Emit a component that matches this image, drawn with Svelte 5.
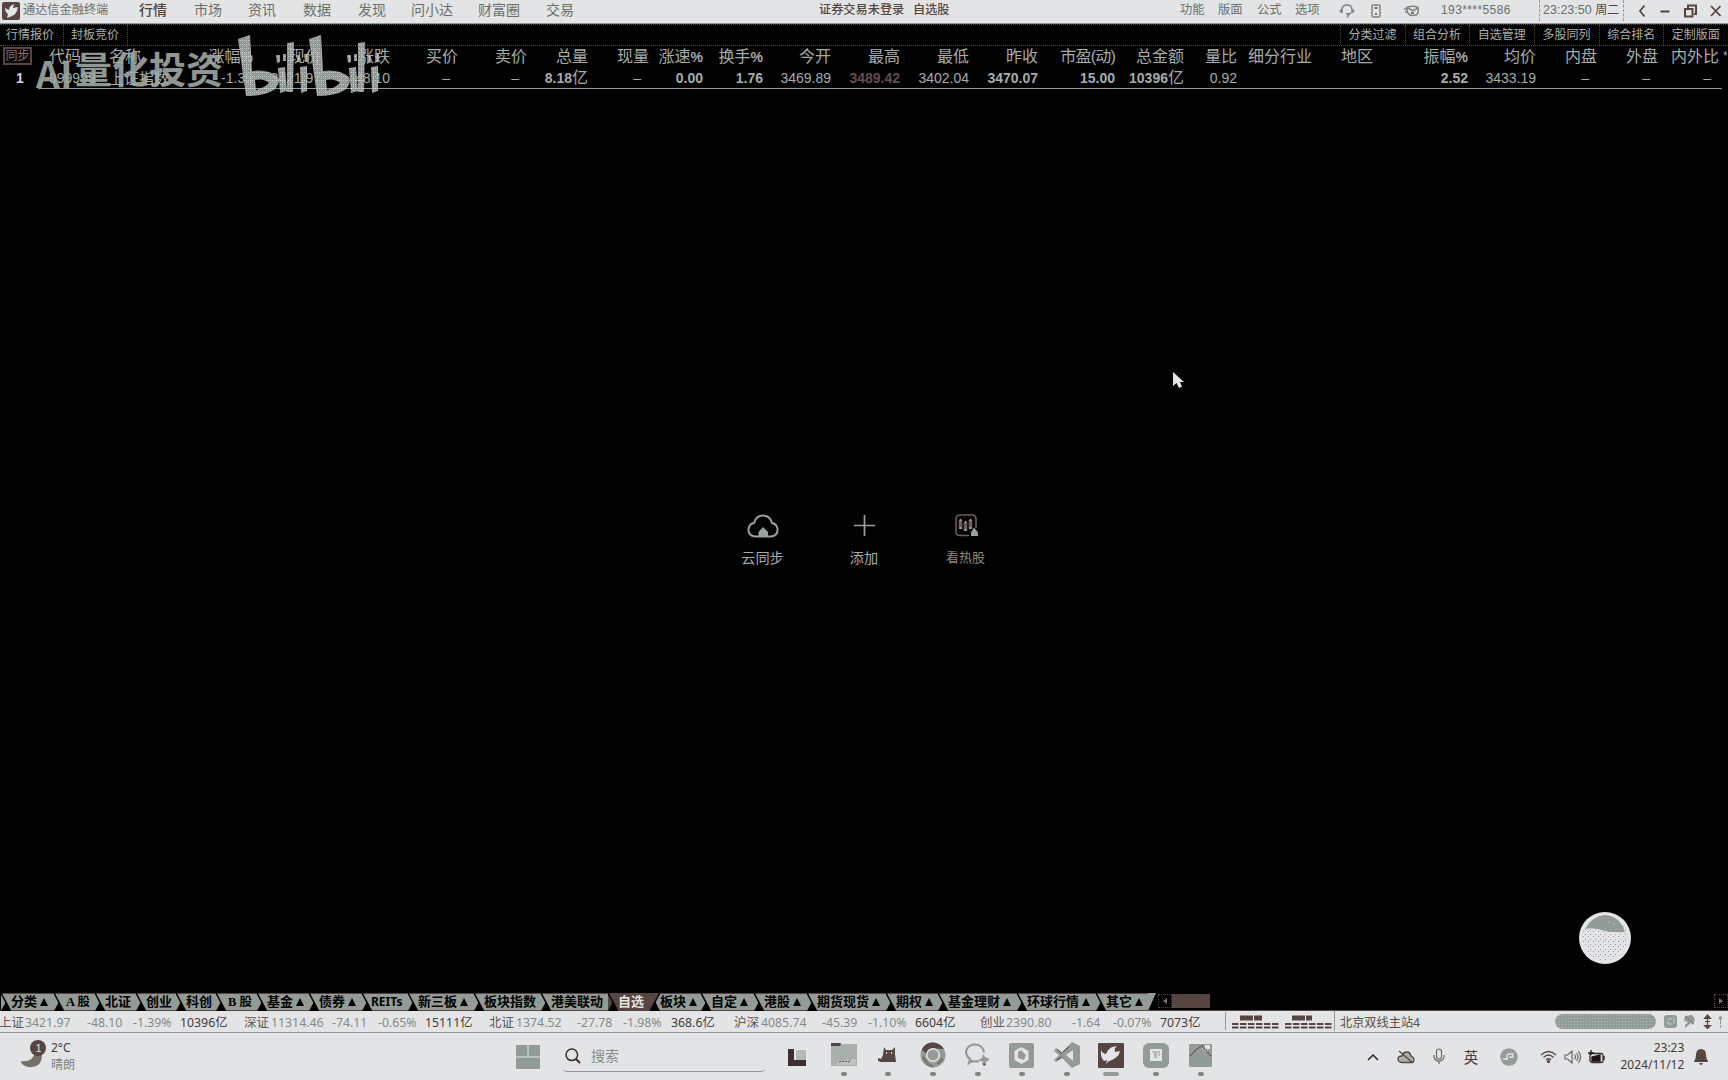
<script>
  // Each strip is a list of [text, start x, tone]; a cell runs up to the next start.
  const toCells = (list, end) =>
    list.map((it, i) => ({
      text: it[0],
      tone: it[2] ?? '',
      width: (i + 1 < list.length ? list[i + 1][1] : end) - it[1]
    }));

  const menu = toCells(
    [['行情', 139, 'on'], ['市场', 194], ['资讯', 248], ['数据', 303], ['发现', 358], ['问小达', 411], ['财富圈', 478], ['交易', 546]],
    819
  );
  const tools = toCells([['功能', 1180], ['版面', 1218], ['公式', 1257], ['选项', 1295]], 1339);
  const subRight = ['分类过滤', '组合分析', '自选管理', '多股同列', '综合排名', '定制版面'];

  // Right edge of every column, header label, value, tone and unit.
  const columns = [
    [253, '涨幅%', '-1.39'], [321, '现价', '3421.97'], [390, '涨跌', '-48.10'],
    [458, '买价', '–'], [527, '卖价', '–'], [588, '总量', '8.18', 'b', '亿'], [649, '现量', '–'],
    [703, '涨速%', '0.00', 'b'], [763, '换手%', '1.76', 'b'], [831, '今开', '3469.89'],
    [900, '最高', '3489.42', 'up'], [969, '最低', '3402.04'], [1038, '昨收', '3470.07', 'b'],
    [1115, '市盈(动)', '15.00', 'b'], [1184, '总金额', '10396', 'b', '亿'], [1237, '量比', '0.92'],
    [1312, '细分行业', ''], [1373, '地区', ''], [1468, '振幅%', '2.52', 'b'],
    [1536, '均价', '3433.19'], [1597, '内盘', '–'], [1658, '外盘', '–'], [1719, '内外比', '–']
  ].map((c, i, all) => ({
    w: c[0] - (i ? all[i - 1][0] : 180), head: c[1], value: c[2], tone: c[3] ?? '', unit: c[4] ?? ''
  }));

  const sheets = [
    ['分类▲', 53], ['A 股', 41], ['北证', 41], ['创业', 40], ['科创', 40], ['B 股', 41], ['基金▲', 52],
    ['债券▲', 53], ['REITs', 46], ['新三板▲', 66], ['板块指数', 67], ['港美联动', 67], ['自选', 42],
    ['板块▲', 51], ['自定▲', 53], ['港股▲', 53], ['期货现货▲', 79], ['期权▲', 52], ['基金理财▲', 79],
    ['环球行情▲', 79], ['其它▲', 52]
  ];

  const ticker = toCells(
    [
      ['上证', -1, 'n'], ['3421.97', 25], ['-48.10', 87], ['-1.39%', 133], ['10396亿', 180, 'd'],
      ['深证', 244, 'n'], ['11314.46', 271], ['-74.11', 332], ['-0.65%', 378], ['15111亿', 425, 'd'],
      ['北证', 489, 'n'], ['1374.52', 516], ['-27.78', 577], ['-1.98%', 623], ['368.6亿', 671, 'd'],
      ['沪深', 734, 'n'], ['4085.74', 761], ['-45.39', 822], ['-1.10%', 868], ['6604亿', 915, 'd'],
      ['创业', 980, 'n'], ['2390.80', 1006], ['-1.64', 1072], ['-0.07%', 1113], ['7073亿', 1160, 'd']
    ],
    1225
  );
</script>

<div class="screen">
  <header class="title">
    <svg class="logo" width="18" height="18" viewBox="0 0 18 18"><rect width="18" height="18" rx="2" fill="#574541" /><path d="M3 6l4 2q0-4 5-6l-1 4 5-1q-1 7-6 9l-5 2 1-4q-3-2-3-6Z" fill="#e2e4e5" /></svg>
    <span class="brand">通达信金融终端</span>
    <nav>
      {#each menu as m}<span class={m.tone} style="width:{m.width}px">{m.text}</span>{/each}
    </nav>
    <span class="state">证券交易未登录</span><span class="state own">自选股</span>
    <div class="tools">
      {#each tools as t}<span style="width:{t.width}px">{t.text}</span>{/each}
      <svg width="16" height="14" viewBox="0 0 16 14" fill="none" stroke="#7d8580" stroke-width="1.500"><path d="M3 9V6q0-5 5-5t5 5v3M1.500 5.500v3M14.500 5.500v3M12 9l-4 1.500M7 9.500l3 1-2 3" /></svg>
      <svg class="phone" width="10" height="14" viewBox="0 0 10 14" fill="none" stroke="#7d8580" stroke-width="1.500"><rect x="1" y="1" width="8" height="12" rx="1" /><path d="M3.500 4h3M4 10h2" stroke="#574541" /></svg>
      <svg class="mail" width="17" height="12" viewBox="0 0 17 12" fill="none" stroke="#7d8580" stroke-width="1.500"><path d="M4 2.500q5-2.500 11 0 1 4-1 7-4 2-8 0-2-2-2-7ZM5 3l5 3 5-3M1 4h3M2 7h3" /><path d="M8 8h3" stroke="#574541" /></svg>
      <span class="account">193****5586</span>
      <span class="clock">23:23:50 <i>周二</i></span>
      <svg class="win" width="86" height="14" viewBox="0 0 86 14" fill="none" stroke="#574541" stroke-width="1.800"><path d="M6.500 1.500 2 7l4.500 5.500M22.500 7.500h9M73 2l9.500 10M82.500 2 73 12" /><path d="M47 5h7.500v7.500H47zM50 4.500V1.500h8V10H56" stroke-width="2" /></svg>
    </div>
  </header>

  <div class="sub">
    <span>行情报价</span><span>封板竞价</span>
    <div class="right">{#each subRight as s}<span>{s}</span>{/each}</div>
  </div>

  <section class="table">
    <div class="tr head">
      <b class="sync">同步</b><span class="code">代码</span><span class="name">名称</span>
      {#each columns as c}<span class="num" class:paren={c.head.includes('(')} style="width:{c.w}px">{c.head.replace('%', '')}{#if c.head.endsWith('%')}<em>%</em>{/if}</span>{/each}
      <span class="more">*</span>
    </div>
    <div class="tr data">
      <span class="idx">1</span><span class="code">999999</span><span class="name">上证指数</span>
      {#each columns as c}<span class="num {c.tone}" class:dash={c.value === '–'} style="width:{c.w}px">{c.value}{#if c.unit}<i>{c.unit}</i>{/if}</span>{/each}
    </div>
    <div class="rule"></div>
    <div class="watermark">
      <span class="latin">AI</span><span>量化投资</span>
      <svg width="144" height="64" viewBox="0 0 144 64">
        <defs>
          <pattern id="grain" width="4" height="4" patternUnits="userSpaceOnUse"><rect width="4" height="4" fill="#a3aca7" /><path d="M0 0h1v1H0zM2 2h1v1H2zM0 2h1v1H0z" fill="#e2e4e5" /></pattern>
          <g id="half">
            <path fill-rule="evenodd" d="M0 5 12 1 14 37Q30 35 40 43 43 49 36 56 26 62 8 62ZM17 46 18 56Q26 54 31 49 26 44 17 46Z" />
            <path d="M38 21h4v7l-3 1zM45 20h3v7h-3zM40 34l7-1 2 24-7 2zM49 9l7-1-1 50h-6zM59 21h3v7h-3zM66 20h4v8h-3zM62 33l7-1v25l-6 2z" />
          </g>
        </defs>
        <g fill="url(#grain)"><use href="#half" /><use href="#half" x="71" /></g>
      </svg>
    </div>
  </section>

  <main>
    <div class="action">
      <svg width="32" height="24" viewBox="0 0 32 24"><path d="M8 22.500q-7-1-6.500-7.500Q2 10 7 9 9 1.500 16 1.500T25 9q5 1 5.500 6 .5 6.500-6.500 7.500Z" fill="none" stroke="#98a19b" stroke-width="2" /><path d="m16 13 5 5v4.500H11.500V18Z" fill="#98a19b" /></svg>
      <span>云同步</span>
    </div>
    <div class="action">
      <svg width="32" height="24" viewBox="0 0 32 24"><path d="M6 11.500h21M16.500 1v21" stroke="#98a19b" stroke-width="1.700" /></svg>
      <span>添加</span>
    </div>
    <div class="action hot">
      <svg width="32" height="24" viewBox="0 0 32 24" fill="none" stroke="#6d5f5b" stroke-width="1.600"><path d="M19 21.500h-9q-4 0-4-4V5q0-4 4-4h12q4 0 4 4v9" /><path d="M10.500 6v9M15.500 8v9M20.500 6v9" stroke="#6d5f5b" stroke-width="3.600" /><path d="M10.500 5v2M15.500 7v2M20.500 5v2M10.500 13v2M15.500 15v2M20.500 13v2" stroke="#a0a8a3" stroke-width="1.600" /><path d="m24 13.500 4 5v3.500h-7v-3.500Z" fill="#98a19b" stroke="none" /></svg>
      <span>看热股</span>
    </div>
    <svg class="cursor" width="14" height="20" viewBox="0 0 14 20"><path d="M1 1v14l3.500-3 2.500 5 3-1.500L8 11h4Z" fill="#e2e4e5" /></svg>
    <svg class="orb" width="54" height="54" viewBox="0 0 54 54">
      <defs><pattern id="dots" width="5" height="5" patternUnits="userSpaceOnUse"><path d="M0 0h1v1H0zM2 3h1v1H2z" fill="#929b95" /></pattern></defs>
      <circle cx="27" cy="27" r="26" fill="#e2e4e5" /><circle cx="27" cy="27" r="22.500" fill="url(#dots)" />
      <path d="M7 18Q14 5 27 4q15 1 20 17-14 1-23-2-9-3-17-1Z" fill="#929b95" />
      <circle cx="31" cy="11" r=".7" fill="#e2e4e5" /><circle cx="36" cy="13" r=".7" fill="#e2e4e5" />
    </svg>
  </main>

  <div class="sheets">
    {#each sheets as s, i}
      <div class="sheet" class:sel={s[0] === '自选'} class:serif={/^[AB]/.test(s[0])} class:latin={s[0] === 'REITs'} style="width:{s[1]}px">
        {#if i && sheets[i - 1][0] === '自选'}
          <svg width="10" height="18" viewBox="0 0 10 18"><path d="M0 0h10L0 18Z" fill="#574541" /><path d="M0 18 5 8l5 10Z" /><path d="M10 0 0 18" stroke="#000" stroke-width="1.500" /></svg>
        {:else}
          <svg width="10" height="18" viewBox="0 0 10 18"><path d="M0 18 5 8.500 10 18Z" /><path d="M0 0 9.500 18" stroke="#000" stroke-width="1.500" /></svg>
        {/if}
        <span>{s[0].replace('▲', '')}</span>{#if s[0].endsWith('▲')}<i></i>{/if}
      </div>
    {/each}
    <svg class="tail" width="8" height="18" viewBox="0 0 8 18"><path d="M0 0h8L0 18Z" fill="#929b95" /></svg>
    <div class="arrow"></div><div class="thumb"></div>
    <div class="arrow end"></div>
  </div>

  <div class="ticker">
    {#each ticker as t}<span class={t.tone} style="width:{t.width}px">{t.text}</span>{/each}
    <svg class="bars" width="110" height="21" viewBox="0 0 110 21">
      <path d="M.5 1v18M109.500 0v20" stroke="#929b95" />
      <path d="M15 7h22M67 7h20" stroke="#574541" stroke-width="5" stroke-dasharray="13 1" />
      <path d="M7 13h47M60 13h47M7 16.500h47M60 16.500h47" stroke="#574541" stroke-width="1.800" stroke-dasharray="6.500 1.500" />
    </svg>
    <span class="host">北京双线主站4</span>
    <div class="pill"></div>
    <svg width="62" height="16" viewBox="0 0 62 16">
      <rect width="13" height="13" x="0" y="1" rx="3" fill="#929b95" /><path d="M4 5h4M4 7v3h4M10 4v6" stroke="#c9cecb" fill="none" />
      <path d="M21 2l7-1 3 4-2 6-2-2-6 5v-3l3-3-4-1Z" fill="#929b95" /><path d="m22 3 8 7" stroke="#574541" stroke-dasharray="1 1.500" />
      <path d="m43.500 1 3 3.500h-6ZM43.500 14.500l3-3h-6ZM43.500 4v9M41 7.500h5" fill="#574541" stroke="#574541" stroke-width="1.200" />
      <path d="M56.500 5v9" stroke="#929b95" stroke-dasharray="5 1" /><circle cx="56.500" cy="4" r="1.800" fill="#929b95" />
    </svg>
  </div>

  <footer>
    <div class="weather">
      <svg width="30" height="32" viewBox="0 0 30 32"><path d="M20 9q4 18-9 19-8 1-12-6 13 2 15-9Z" fill="#76706b" /><circle cx="17" cy="9" r="8" fill="#574541" /><text x="14.500" y="13" fill="#e2e4e5" font-size="11" font-family="Liberation Sans, sans-serif">1</text></svg>
      <div><span>2°C</span><span class="sky">晴朗</span></div>
    </div>
    <svg class="start" width="24" height="24" viewBox="0 0 24 24" fill="#929b95"><path d="M0 0h11.500v11.500H0zM12.500 0H24v11.500H12.500zM0 12.500h24V24H0z" /></svg>
    <div class="search"><svg width="16" height="16" viewBox="0 0 16 16" fill="none" stroke="#3a2f2d" stroke-width="1.500"><circle cx="6.800" cy="6.800" r="5.800" /><path d="m11 11 4 4" stroke-width="2" /></svg><span>搜索</span></div>
    <div class="apps">
      <div class="views"><svg viewBox="0 0 26 26"><path d="M12 8h10v10H12z" fill="#b3bab6" /><path d="M4 7h6v11h12v6H4z" fill="#3c2f2d" /></svg></div>
      <div class="run"><svg viewBox="0 0 26 26"><path d="M0 2h26v21q0 1-1 1H1q-1 0-1-1Z" fill="#a9b0ac" /><path d="M0 1h10l-1 3H0z" fill="#574541" /><path d="M5 22q2-4 6-3l4-1 2-1h8v6H5Z" fill="#c0c5c2" /><path d="M8 20l5-1 5 1 1-3" fill="none" stroke="#574541" stroke-dasharray="2 1" /></svg></div>
      <div class="run"><svg viewBox="0 0 26 26"><path d="m9 5 2 3h6l3-3v7l1 8H6l-3-1v-3l3 1 2-4Z" fill="#574541" /><path d="M11 10h1v2h-1zM16 10h1v2h-1z" fill="#e2e4e5" /></svg></div>
      <div class="run"><svg viewBox="0 0 26 26"><circle cx="13" cy="13" r="9.500" fill="none" stroke="#929b95" stroke-width="6" /><path d="M2 7q4-7 11-6.500T24 7L13 6.500Q8 8 7 12L2 8Z" fill="#574541" /><path d="m3 15 5 7 5 3M18 22l5-6" fill="none" stroke="#574541" stroke-width="2" stroke-dasharray="1 1" /><circle cx="13" cy="13" r="7" fill="#e2e4e5" /><circle cx="13" cy="13" r="5.500" fill="#929b95" /></svg></div>
      <div class="run"><svg viewBox="0 0 26 26"><path d="M14 19q-4 1-7 0l-3 2 1-4Q1 14 1 10q1-7 9-7.500 8 .5 9 8" fill="none" stroke="#929b95" stroke-width="2.200" /><path d="m18 12 2 3 5 2-4 3-1 4-2-4-5-2 4-2Z" fill="#929b95" /><path d="m17 21 4 1-2 2Z" fill="#574541" /></svg></div>
      <div class="run"><svg viewBox="0 0 26 26"><rect y="1" width="25" height="25" rx="2" fill="#929b95" /><path d="m12.500 5 7 4v9l-7 4-7-4V9Z" fill="#e2e4e5" /><path d="m9 10 3-2 5 5-2 5-6-2Z" fill="#929b95" /></svg></div>
      <div class="run"><svg viewBox="0 0 26 26"><path d="M18 0l8 4v18l-8 4L8 16l-6 4-2-2 5-5-5-4 2-3 6 4Z" fill="#929b95" /><path d="M19 8v11l-7-6Z" fill="#e2e4e5" /><path d="m3 7 5 5M3 18l5-3M9 10l6-5" stroke="#574541" /></svg></div>
      <div class="run active"><svg viewBox="0 0 26 26"><rect y="1" width="26" height="25" rx="1" fill="#574541" /><path d="M3 8q1 3 5 4 2-5 6-7l5-1q-3 2-2 6l5-1q-1 6-8 9-5 1-6 5l1-5-3 1q-4-4-3-11Z" fill="#e2e4e5" /></svg></div>
      <div class="run"><svg viewBox="0 0 26 26"><rect y="1" width="26" height="25" rx="6" fill="#929b95" /><path d="M8 7h11v12H7V7Z" fill="#e2e4e5" /><path d="M9 10h3v6M15 10h-2v6M16 9v5" fill="none" stroke="#929b95" /></svg></div>
      <div class="run"><svg viewBox="0 0 26 26"><rect x="1" y="2" width="23" height="23" rx="1" fill="#929b95" /><path d="m2 14 7-7 5-3 9 10" fill="none" stroke="#574541" stroke-width="1.200" stroke-dasharray="2 1" /><path d="M17 3h5v4h-5z" fill="#e2e4e5" /><path d="M14 6l3 3 3-1" fill="none" stroke="#e2e4e5" stroke-dasharray="1 1" /></svg></div>
    </div>
    <div class="tray">
      <svg width="12" height="8" viewBox="0 0 12 8" fill="none" stroke="#2c2422" stroke-width="1.500"><path d="m1 7 5-5 5 5" /></svg>
      <svg class="t2" width="18" height="14" viewBox="0 0 18 14" fill="none" stroke="#574541" stroke-width="1.300"><path d="M5 12.500Q1 12 1 9t4-3q1-4 5-4 3 0 4 4 3 1 3 4t-3 2.500Z" fill="#a8b0ac" /><path d="m2 1 14 12" /></svg>
      <svg class="t3" width="12" height="17" viewBox="0 0 12 17" fill="none" stroke="#6d6a66" stroke-width="1.200"><rect x="3.500" y="1" width="5" height="10" rx="2.500" /><path d="M1 7v2q1 4 5 4t5-4V7M6 13v3" /></svg>
      <span class="ime">英</span>
      <svg class="t4" width="18" height="18" viewBox="0 0 18 18"><circle cx="9" cy="9" r="8.700" fill="#929b95" /><path d="M3 11h5M7 12V8q0-2 2-2h4v3H9" stroke="#e2e4e5" stroke-width="1.400" fill="none" /></svg>
      <svg class="t5" width="17" height="13" viewBox="0 0 17 13" fill="none" stroke="#574541" stroke-width="1.200"><path d="M1 5q7.500-7 15 0M3.500 7.500q5-5 10 0M6 10q2.500-2.500 5 0" /><circle cx="8.500" cy="11.500" r="1" fill="#574541" /></svg>
      <svg class="t6" width="18" height="14" viewBox="0 0 18 14" fill="none" stroke="#6d6a66" stroke-width="1.200"><path d="M1 5h2.500L8 1v12L3.500 9H1ZM10.500 4.500q2 2.500 0 5M12.500 3q3 4 0 8M14.500 1q4 6 0 12" /></svg>
      <svg class="t7" width="18" height="14" viewBox="0 0 18 14"><rect x="2" y="3.500" width="13" height="9" rx="2" fill="#fff0" stroke="#3a2f2d" stroke-width="1.300" /><path d="M4 11V7l8-2v6ZM16 6v4M3 0v5M0 3h6" fill="#1c1615" stroke="#1c1615" stroke-width="1.300" /></svg>
      <div class="when"><span>23:23</span><span>2024/11/12</span></div>
      <svg class="bell" width="14" height="16" viewBox="0 0 14 16"><path d="M7 0q5 0 5 6 0 4 2 6v1H0v-1q2-2 2-6 0-6 5-6ZM5 14h4q-1 2-2 2t-2-2Z" fill="#574541" /></svg>
    </div>
  </footer>
</div>

<style>
  :global(body) { margin: 0; background: #000; }
  .screen {
    width: 1728px; height: 1080px; overflow: hidden; display: flex; flex-direction: column;
    background: #000; color: #a6ada9; white-space: nowrap;
    font-family: "Liberation Sans", "Noto Sans CJK SC", sans-serif;
  }
  .screen * { box-sizing: border-box; }
  span, svg { flex: none; }
  i, em { font-style: normal; }

  .title { height: 24px; display: flex; align-items: center; background: #e2e4e5; border-bottom: 1px solid #929b95; color: #69706c; padding: 0 0 2px 2px; line-height: 21px; }
  .brand { width: 116px; padding-left: 3px; font-size: 12.2px; }
  nav { display: flex; margin-left: 3px; font-size: 14px; }
  nav .on { color: #574541; font-weight: 500; }
  .state { font-size: 12.2px; width: 94px; color: #574541; font-weight: 500; }
  .own { width: 267px; }
  .tools { display: flex; align-items: center; font-size: 12.3px; }
  .phone { margin-left: 16px; }
  .mail { margin-left: 22px; }
  .account { margin-left: 21px; width: 98px; font-size: 12px; letter-spacing: .4px; }
  .clock { width: 85px; height: 21px; border-left: 1px dashed #929b95; border-right: 1px dashed #929b95; padding-left: 3px; font-size: 12.5px; }
  .clock i { font-size: 12px; color: #574541; }
  .win { margin-left: 14px; }

  .sub { height: 22px; display: flex; border: dotted #574541; border-width: 1px 0; font-size: 12px; line-height: 21px; color: #a9afab; }
  .sub > span { width: 64px; padding-left: 7px; border-right: 1px dotted #574541; }
  .sub > span:first-child { padding-left: 6px; }
  .right { margin-left: auto; display: flex; }
  .right span { width: 64.700px; border-left: 1px dotted #574541; padding-left: 7.500px; }

  .table { height: 43px; position: relative; }
  .tr { display: flex; height: 21px; line-height: 21px; }
  .head { font-size: 16px; padding-left: 1px; }
  .head em { font-size: 14px; font-weight: bold; }
  .head .paren { letter-spacing: -.8px; }
  .sync { width: 29px; height: 18px; margin: 1px 17px 0 2px; border: 2px solid #574541; background: #0b0808; font-size: 12px; font-weight: 400; line-height: 14px; text-align: center; color: #84736d; }
  .code { width: 60px; }
  .name { width: 71px; }
  .num { text-align: right; }
  .more { padding-left: 4px; width: 8px; overflow: hidden; font-size: 12px; }
  .data { font-size: 14px; line-height: 23px; }
  .data .b { font-weight: bold; }
  .data .b i { font-size: 16px; font-weight: 400; line-height: 1; }
  .data .up { color: #624e4a; font-weight: bold; }
  .data .dash { padding-right: 8px; }
  .data .name { font-size: 15px; }
  .idx { width: 49px; padding-left: 16px; font-weight: bold; color: #d5d8d8; }
  .rule { height: 1px; margin-left: 38px; width: 1684px; background: #929b95; }
  .watermark { position: absolute; left: 36px; top: -12px; height: 64px; display: flex; font-size: 37px; font-weight: bold; line-height: 76px; opacity: .88; color: #a3aca7; }
  .watermark .latin { width: 39px; font-family: "Noto Sans CJK SC", sans-serif; letter-spacing: .5px; }
  .watermark svg { margin-left: 15px; }

  main { flex: 1; position: relative; display: flex; justify-content: center; padding: 425px 0 0 0; }
  .action { width: 101.500px; display: flex; flex-direction: column; align-items: center; gap: 10px; font-size: 14.200px; line-height: 20px; }
  .hot { font-size: 13px; color: #8d8782; line-height: 19px; }
  .cursor { position: absolute; left: 1172px; top: 282px; }
  .orb { position: absolute; left: 1578px; top: 822px; }

  .sheets { height: 18px; display: flex; padding-left: 1px; align-items: stretch; border-bottom: 1px solid #574541; }
  .sheet { flex: none; display: flex; align-items: center; background: #929b95; border-top: 1px solid #574541; color: #000; font-size: 13px; font-weight: bold; line-height: 16px; }
  .sheet svg { margin-top: -1px; height: 18px; }
  .sheet.sel { background: #574541; color: #e2e4e5; }
  .sheet.serif { font-family: "Liberation Serif", "Noto Sans CJK SC", serif; }
  .sheet.serif span { padding-left: 2px; font-size: 12.500px; }
  .sheet.latin { font-size: 12px; font-family: "Noto Sans", sans-serif; }
  .sheet.latin span { margin-left: -1px; }
  .sheet i { border: 4px solid transparent; border-top: 0; border-bottom: 8px solid #000; margin-left: 3px; }
  .arrow { width: 14px; height: 14px; margin-top: 1px; border: 1px dotted #574541; display: grid; place-items: center; }
  .arrow::before { content: ""; border: 3px solid transparent; border-left: 0; border-right: 4px solid #806f69; }
  .tail + .arrow { margin-left: 2px; }
  .thumb { width: 38px; height: 14px; margin-top: 1px; background: #574541; }
  .arrow.end { margin-left: auto; }
  .arrow.end::before { border: 3px solid transparent; border-right: 0; border-left: 4px solid #806f69; }

  .ticker { height: 22px; display: flex; align-items: center; background: #e2e4e5; border-bottom: 1px solid #929b95; color: #848c87; font-family: "Noto Sans", "Noto Sans CJK SC", sans-serif; font-size: 12.300px; line-height: 19px; }
  .ticker span { padding-top: 2px; }
  .ticker span:first-child { margin-left: -1px; }
  .ticker .n { color: #5f5a56; font-size: 12.500px; }
  .ticker .d { color: #463b38; }
  .ticker .host { width: 220px; padding-left: 5px; color: #574f4b; font-size: 12.200px; }
  .pill { width: 101px; height: 15px; margin-right: 8px; border-radius: 8px; background: radial-gradient(#b8bebb 30%, transparent 32%) 0 0 / 3px 3px, #929b95; }

  footer { height: 47px; display: flex; align-items: center; background: #e2e4e5; color: #463b38; font-family: "Noto Sans", "Noto Sans CJK SC", sans-serif; }
  .weather { width: 497px; padding-left: 21px; margin-bottom: 2px; display: flex; gap: 0; font-size: 12px; line-height: 17px; }
  .weather div { display: flex; flex-direction: column; }
  .weather .sky { color: #7d8580; }
  .start { margin-left: 19px; }
  .search { width: 202px; height: 32px; margin: 0 0 1px 23px; display: flex; align-items: center; gap: 10px; padding-left: 2px; border-bottom: 1px solid #929b95; border-radius: 4px; font-size: 14px; color: #868e89; }
  .search span { margin-top: -2px; }
  .apps { margin-left: 10px; display: flex; }
  .apps div { width: 44.600px; height: 47px; display: flex; flex-direction: column; align-items: center; padding-top: 9px; }
  .apps .views { width: 46.500px; padding-right: 2px; }
  .apps svg { width: 26px; height: 26px; }
  .run::after { content: ""; width: 6px; height: 4px; margin-top: 4px; border-radius: 2px; background: #7d8580; }
  .active::after { width: 16px; background: #929b95; }
  .tray { margin-left: 144px; display: flex; align-items: center; }
  .t2 { margin-left: 18px; }
  .t3 { margin-left: 18px; }
  .ime { margin-left: 19px; font-size: 14.500px; }
  .t4 { margin-left: 22px; }
  .t5 { margin-left: 22px; }
  .t6 { margin-left: 7px; }
  .t7 { margin-left: 6px; }
  .when { width: 78px; margin-bottom: 2px; display: flex; flex-direction: column; text-align: right; font-size: 12px; line-height: 17px; }
  .bell { margin-left: 10px; }
</style>
